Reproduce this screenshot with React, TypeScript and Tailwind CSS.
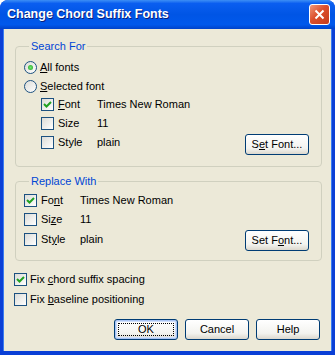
// "Change Chord Suffix Fonts" dialog, Windows XP look

const font = "font-['Liberation_Sans',Arial,sans-serif] text-[11px] leading-[13px] text-black";

function Checkbox({ checked }: { checked?: boolean }) {
  return (
    <span className="w-[13px] h-[13px] shrink-0 border border-[#1c5180] bg-[linear-gradient(135deg,#dcdcd7,#ffffff)] flex items-center justify-center">
      {checked && (
        <svg width="11" height="11" viewBox="0 0 11 11">
          <path d="M2 5 L4.5 7.5 L9 3" fill="none" stroke="#21a121" strokeWidth="2" />
        </svg>
      )}
    </span>
  );
}

function Radio({ checked }: { checked?: boolean }) {
  return (
    <span className="w-[13px] h-[13px] shrink-0 rounded-full border border-[#1c5180] bg-[linear-gradient(135deg,#dcdcd7,#ffffff)] flex items-center justify-center">
      {checked && <span className="w-[5px] h-[5px] rounded-full bg-[radial-gradient(circle,#6ee86e,#21a121)]" />}
    </span>
  );
}

function Button({ children, isDefault }: { children: React.ReactNode; isDefault?: boolean }) {
  return (
    <button
      className={
        "relative w-[64px] h-[21px] shrink-0 rounded-[3px] border border-[#003c74] bg-[linear-gradient(to_bottom,#ffffff,#f3f3ef_70%,#dcd8ce)] flex items-center justify-center " +
        font +
        (isDefault ? " shadow-[inset_0_0_0_1px_#a9c4f4,inset_0_0_0_2px_#cfdffb]" : "")
      }
    >
      {isDefault && <span className="absolute inset-[3px] border border-dotted border-black" />}
      {children}
    </button>
  );
}

function CheckRow({ label, value, checked }: { label: React.ReactNode; value?: string; checked?: boolean }) {
  return (
    <div className="flex items-center h-[13px]">
      <Checkbox checked={checked} />
      <span className="ml-[4px] w-[39px] shrink-0">{label}</span>
      {value && <span>{value}</span>}
    </div>
  );
}

export default function App() {
  return (
    <div className={"w-[335px] h-[355px] flex flex-col rounded-t-[8px] overflow-hidden bg-[#0a3fd6] " + font}>
      {/* title bar */}
      <div className="h-[29px] shrink-0 flex items-center pl-[7px] pr-[5px] bg-[linear-gradient(to_bottom,#3d8ff5_0%,#0a5ef0_12%,#0055e5_50%,#0058ec_85%,#0042c9_100%)]">
        <span className="flex-1 font-bold text-[12.5px] text-white [text-shadow:1px_1px_0_#0a1e7a]">
          Change Chord Suffix Fonts
        </span>
        <span className="w-[21px] h-[21px] rounded-[3px] border border-white bg-[linear-gradient(135deg,#f0987a,#dc4f2c_45%,#c63b1c)] flex items-center justify-center">
          <svg width="11" height="11" viewBox="0 0 11 11">
            <path d="M1.5 1.5 L9.5 9.5 M9.5 1.5 L1.5 9.5" stroke="white" strokeWidth="2" />
          </svg>
        </span>
      </div>

      {/* body */}
      <div className="flex-1 mx-[3px] mb-[4px] bg-[#ece9d8] flex flex-col pt-[11px] pl-[12px] pr-[10px] shadow-[inset_1px_0_0_#3a7cf0,inset_-1px_0_0_#3a7cf0]">
        <fieldset className="border border-[#d0d0bf] rounded-[4px] pt-[8px] pb-[17px] pl-[8px] pr-[12px]">
          <legend className="ml-[5px] px-[2px] text-[#0046d5]">Search For</legend>
          <div className="flex items-center h-[13px]">
            <Radio checked />
            <span className="ml-[3px]"><u>A</u>ll fonts</span>
          </div>
          <div className="flex items-center h-[13px] mt-[6px]">
            <Radio />
            <span className="ml-[3px]"><u>S</u>elected font</span>
          </div>
          <div className="ml-[17px] flex flex-col">
            <div className="mt-[5px]">
              <CheckRow checked label={<><u>F</u>ont</>} value="Times New Roman" />
            </div>
            <div className="mt-[6px]">
              <CheckRow label="Size" value="11" />
            </div>
            <div className="mt-[6px] flex items-center h-[13px]">
              <CheckRow label="Style" value="plain" />
              <span className="ml-auto mt-[3px]">
                <Button>S<u>e</u>t Font...</Button>
              </span>
            </div>
          </div>
        </fieldset>

        <fieldset className="mt-[8px] border border-[#d0d0bf] rounded-[4px] pt-[6px] pb-[14px] pl-[8px] pr-[12px]">
          <legend className="ml-[5px] px-[2px] text-[#0046d5]">Replace With</legend>
          <CheckRow checked label={<>Fo<u>n</u>t</>} value="Times New Roman" />
          <div className="mt-[6px]">
            <CheckRow label={<>Si<u>z</u>e</>} value="11" />
          </div>
          <div className="mt-[7px] flex items-center h-[13px]">
            <CheckRow label={<>St<u>y</u>le</>} value="plain" />
            <span className="ml-auto mt-[1px]">
              <Button>Set F<u>o</u>nt...</Button>
            </span>
          </div>
        </fieldset>

        <div className="mt-[12px] -ml-[1px] flex items-center h-[13px]">
          <Checkbox checked />
          <span className="ml-[3px]">Fix <u>c</u>hord suffix spacing</span>
        </div>
        <div className="mt-[7px] -ml-[1px] flex items-center h-[13px]">
          <Checkbox />
          <span className="ml-[3px]">Fix <u>b</u>aseline positioning</span>
        </div>

        <div className="mt-[13px] mr-[2px] flex justify-end gap-[7px]">
          <Button isDefault>OK</Button>
          <Button>Cancel</Button>
          <Button>Help</Button>
        </div>
      </div>
    </div>
  );
}
